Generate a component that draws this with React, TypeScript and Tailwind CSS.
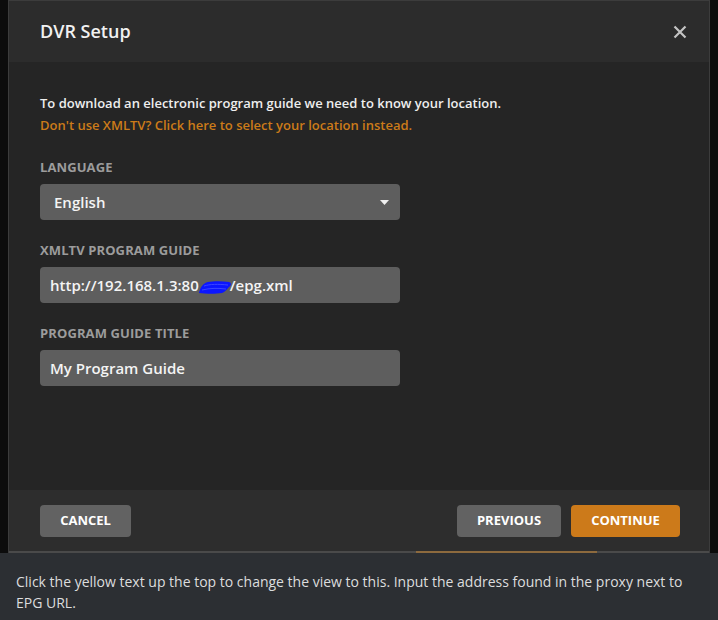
import React from "react"

const fieldLabel = "text-[13px] leading-[18px] font-bold tracking-[0.1px] text-[#9c9c9c] uppercase"

// blue marker scribble that hides part of the address
const Scribble = () => (
    <svg width="34" height="15" viewBox="0 0 34 15" className="inline-block align-middle -ml-[1px] -mr-[2px] mt-[1px]">
        <path
            d="M1 13 C2 8 5 3 10 2 C16 1 24 1 31 2 C34 3 33 6 31 7 C29 9 27 12 24 13 C18 14 8 14 1 13 Z"
            fill="#0b16ff"
        />
        <path
            d="M6 6 C12 4 20 4 30 5 M4 10 C12 8 20 8 28 9"
            stroke="#3a46ff"
            strokeWidth="1"
            fill="none"
        />
    </svg>
)

const App = () => {
    return (
        <div
            className="w-[718px] h-[620px] bg-[#0c0c0c] flex flex-col overflow-hidden"
            style={{ fontFamily: '"Open Sans", "Liberation Sans", sans-serif' }}
        >
            <div className="flex pl-[8px] h-[553px]">
                <div className="w-[702px] h-full flex flex-col border-x border-t border-[#3c3c3c] bg-[#252525]">
                    {/* header */}
                    <div className="h-[61px] bg-[#2c2c2c] flex items-center justify-between pl-[31px] pr-[22px]">
                        <h1 className="text-[18px] font-semibold text-[#f1f1f1]">DVR Setup</h1>
                        <svg width="14" height="14" viewBox="0 0 14 14">
                            <path d="M1.5 1.5 L12.5 12.5 M12.5 1.5 L1.5 12.5" stroke="#c4c4c4" strokeWidth="2.2" />
                        </svg>
                    </div>

                    {/* body */}
                    <div className="flex-1 pt-[30px] px-[31px]">
                        <p className="text-[13px] leading-[22px] font-semibold text-[#eeeeee]">
                            To download an electronic program guide we need to know your location.
                        </p>
                        <p className="text-[13px] leading-[22px] font-semibold text-[#cc7b19]">
                            Don't use XMLTV? Click here to select your location instead.
                        </p>

                        <div className={`${fieldLabel} mt-[22px]`}>Language</div>
                        <div className="mt-[8px] w-[360px] h-[36px] rounded-[4px] bg-[#5e5e5e] flex items-center justify-between pl-[14px] pr-[11px]">
                            <span className="text-[15px] font-semibold text-[#f4f4f4]">English</span>
                            <svg width="9" height="5" viewBox="0 0 9 5">
                                <path d="M0 0 H9 L4.5 5 Z" fill="#f0f0f0" />
                            </svg>
                        </div>

                        <div className={`${fieldLabel} mt-[21px]`}>XMLTV Program Guide</div>
                        <div className="mt-[8px] w-[360px] h-[36px] rounded-[4px] bg-[#5e5e5e] flex items-center pl-[10px]">
                            <span className="text-[15px] font-semibold text-[#f4f4f4] whitespace-nowrap">
                                http://192.168.1.3:80<Scribble />/epg.xml
                            </span>
                        </div>

                        <div className={`${fieldLabel} mt-[21px]`}>Program Guide Title</div>
                        <div className="mt-[8px] w-[360px] h-[36px] rounded-[4px] bg-[#5e5e5e] flex items-center pl-[10px]">
                            <span className="text-[15px] font-semibold text-[#f4f4f4]">My Program Guide</span>
                        </div>
                    </div>

                    {/* footer */}
                    <div className="h-[63px] bg-[#2d2d2d] flex flex-col">
                        <div className="flex-1 flex items-start pt-[15px] justify-between pl-[31px] pr-[29px]">
                            <button className="w-[91px] h-[32px] rounded-[4px] bg-[#626262] text-white text-[13px] font-bold">
                                CANCEL
                            </button>
                            <div className="flex gap-[10px]">
                                <button className="w-[104px] h-[32px] rounded-[4px] bg-[#626262] text-white text-[13px] font-bold">
                                    PREVIOUS
                                </button>
                                <button className="w-[109px] h-[32px] rounded-[4px] bg-[#cc7a1a] text-white text-[13px] font-bold">
                                    CONTINUE
                                </button>
                            </div>
                        </div>
                        <div className="h-[2px] bg-[#4a4a4a] flex">
                            <div className="ml-[407px] w-[181px] h-full bg-[#8d6a3e]" />
                        </div>
                    </div>
                </div>
            </div>

            {/* caption */}
            <div className="flex-1 bg-[#2c2f33] pt-[18px] pl-[16px] pr-[20px]">
                <p className="text-[14px] leading-[21px] text-[#dcddde]">
                    Click the yellow text up the top to change the view to this. Input the address found in the proxy next to EPG URL.
                </p>
            </div>
        </div>
    )
}

export default App
